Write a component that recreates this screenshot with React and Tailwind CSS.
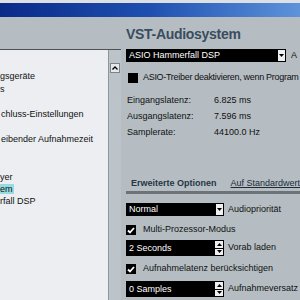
import React from 'react';

const font = { fontFamily: '"Liberation Sans", Arial, sans-serif' };

function DownArrow() {
    return (
        <svg width="5" height="3" viewBox="0 0 5 3">
            <path d="M0 0 L5 0 L2.5 3 Z" fill="#000" />
        </svg>
    );
}

function Dropdown({ value, width }) {
    return (
        <div className={`flex h-[13px] ${width} bg-black items-stretch`}>
            <div className="flex-1 pl-[3px] text-[9px] leading-[13px] text-white truncate">{value}</div>
            <div className="w-[7px] my-[1px] mr-[1px] bg-[#eef0f2] flex items-center justify-center">
                <DownArrow />
            </div>
        </div>
    );
}

function Spinner({ value }) {
    return (
        <div className="flex h-[16px] w-[98px] bg-black items-stretch">
            <div className="flex-1 pl-[3px] text-[9px] leading-[16px] text-white">{value}</div>
            <div className="w-[8px] my-[1px] mr-[1px] flex flex-col gap-[1px]">
                <div className="flex-1 bg-[#eef0f2] flex items-center justify-center">
                    <svg width="5" height="3" viewBox="0 0 5 3">
                        <path d="M0 3 L5 3 L2.5 0 Z" fill="#000" />
                    </svg>
                </div>
                <div className="flex-1 bg-[#eef0f2] flex items-center justify-center">
                    <DownArrow />
                </div>
            </div>
        </div>
    );
}

function Check({ checked }) {
    return (
        <div className="w-[10px] h-[10px] bg-black flex items-center justify-center">
            {checked && (
                <svg width="8" height="7" viewBox="0 0 8 7">
                    <path d="M1 3.5 L3 5.5 L7 1" stroke="#fff" strokeWidth="1.8" fill="none" />
                </svg>
            )}
        </div>
    );
}

function InfoRow({ label, value }) {
    return (
        <div className="flex h-[16px] items-center text-[9px] text-[#111]">
            <span className="w-[88px] pl-[1px]">{label}</span>
            <span>{value}</span>
        </div>
    );
}

const listItems = [
    { text: 'gsgeräte', top: 'mt-[20px]' },
    { text: 's', top: 'mt-[1px]' },
    { text: 'chluss-Einstellungen', top: 'mt-[13px]', pad: 'pl-[1px]' },
    { text: 'eibender Aufnahmezeit', top: 'mt-[13px]', pad: 'pl-[1px]' },
    { text: 'yer', top: 'mt-[26px]' },
    { text: 'em', top: 'mt-0', selected: true },
    { text: 'rfall DSP', top: 'mt-0' },
];

export default function App() {
    return (
        <div className="w-[300px] h-[300px] overflow-hidden bg-[#b5bdc3] flex flex-col" style={font}>
            <div className="h-[3px] bg-[#dde1e5]" />
            <div className="h-[14px] bg-gradient-to-r from-[#0b2a88] via-[#1f50b0] to-[#5e93da]" />
            <div className="flex flex-1">
                <div className="w-[121px] mt-[32px] flex border-t border-[#4c5258]">
                    <div className="w-[108px] bg-[#eceef2] flex flex-col text-[9px] text-[#111] leading-[12px]">
                        {listItems.map((it) => (
                            <div key={it.text} className={`${it.top} ${it.pad || ''} h-[12px]`}>
                                {it.selected ? (
                                    <span className="bg-[#96dbe2] pr-[1px]">{it.text}</span>
                                ) : (
                                    it.text
                                )}
                            </div>
                        ))}
                    </div>
                    <div className="w-[13px] bg-[#bcc3c9] border-l border-[#8e969c] flex flex-col items-center">
                        <div className="mt-[13px] w-[10px] h-[10px] bg-[#e6e9ec] border border-[#7d858b] flex items-center justify-center">
                            <svg width="6" height="4" viewBox="0 0 6 4">
                                <path d="M0.5 3.5 L3 1 L5.5 3.5" stroke="#000" strokeWidth="1.3" fill="none" />
                            </svg>
                        </div>
                    </div>
                </div>
                <div className="w-[2px] mt-[32px] bg-[#7e868c]" />
                <div className="flex-1 pl-[5px] flex flex-col">
                    <div className="mt-[9px] h-[16px] text-[14px] leading-[16px] font-bold text-[#3a4c5e] tracking-[-0.3px] whitespace-nowrap">
                        VST-Audiosystem
                    </div>
                    <div className="mt-[7px] flex items-center whitespace-nowrap">
                        <Dropdown value="ASIO Hammerfall DSP" width="w-[160px]" />
                        <span className="ml-[5px] text-[9px] text-[#111]">A</span>
                    </div>
                    <div className="mt-[8px] h-[14px] flex items-center whitespace-nowrap pl-[2px]">
                        <Check />
                        <span className="ml-[5px] text-[9px] text-[#111] tracking-[-0.3px]">
                            ASIO-Treiber deaktivieren, wenn Program
                        </span>
                    </div>
                    <div className="mt-[8px]">
                        <InfoRow label="Eingangslatenz:" value="6.825 ms" />
                        <InfoRow label="Ausgangslatenz:" value="7.596 ms" />
                        <InfoRow label="Samplerate:" value="44100.0 Hz" />
                    </div>
                    <div className="mt-[36px] h-[14px] flex items-center whitespace-nowrap">
                        <span className="ml-[5px] text-[9px] font-bold text-[#263646]">Erweiterte Optionen</span>
                        <span className="ml-[14px] text-[9px] underline text-[#1c2b3a]">Auf Standardwert</span>
                    </div>
                    <div className="h-[3px] bg-[#6b7379]" />
                    <div className="mt-[9px] flex items-center whitespace-nowrap">
                        <Dropdown value="Normal" width="w-[98px]" />
                        <span className="ml-[4px] text-[9px] text-[#111]">Audiopriorität</span>
                    </div>
                    <div className="mt-[7px] h-[14px] flex items-center whitespace-nowrap">
                        <Check checked />
                        <span className="ml-[7px] text-[9px] text-[#111]">Multi-Prozessor-Modus</span>
                    </div>
                    <div className="mt-[3px] flex items-center whitespace-nowrap">
                        <Spinner value="2 Seconds" />
                        <span className="ml-[4px] text-[9px] text-[#111]">Vorab laden</span>
                    </div>
                    <div className="mt-[6px] h-[14px] flex items-center whitespace-nowrap">
                        <Check checked />
                        <span className="ml-[7px] text-[9px] text-[#111]">Aufnahmelatenz berücksichtigen</span>
                    </div>
                    <div className="mt-[5px] flex items-center whitespace-nowrap">
                        <Spinner value="0 Samples" />
                        <span className="ml-[4px] text-[9px] text-[#111]">Aufnahmeversatz</span>
                    </div>
                </div>
            </div>
        </div>
    );
}
